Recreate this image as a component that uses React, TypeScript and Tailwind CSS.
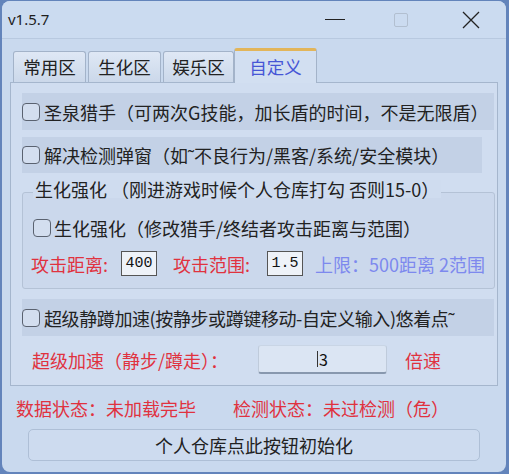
import React from "react";

const CN = { fontFamily: '"Noto Sans CJK SC", "Microsoft YaHei", sans-serif' };

function Check() {
  return (
    <span className="inline-block w-[18px] h-[18px] rounded-[4px] border-[1.5px] border-[#5a6270] bg-[#d3deef] shrink-0" />
  );
}

export default function App() {
  return (
    <div className="w-[509px] h-[474px] bg-[#6384bb] pl-[2px] pr-[3px] pb-[2px] pt-[1px]" style={CN}>
      <div className="h-full rounded-[8px] bg-[#c9d9ee] flex flex-col overflow-hidden">
        {/* title bar */}
        <div className="h-[38px] flex items-center border-b border-[#b8c9e0] bg-[#cbdbf0] shrink-0">
          <span className="ml-[6px] text-[15px] text-[#1e1e1e]" style={{ fontFamily: '"Noto Sans", sans-serif' }}>v1.5.7</span>
          <div className="flex-1" />
          <div className="w-[20px] h-[1px] bg-[#222] mr-[49px]" />
          <div className="w-[14px] h-[14px] border border-[#b2bfd0] rounded-[2px] mr-[54px]" />
          <svg width="18" height="18" viewBox="0 0 18 18" className="mr-[26px]">
            <path d="M1 1 L17 17 M17 1 L1 17" stroke="#222" strokeWidth="1.3" />
          </svg>
        </div>
        {/* tabs */}
        <div className="flex items-end ml-[11px] mt-[8px] h-[35px] shrink-0 relative z-10">
          {["常用区", "生化区", "娱乐区"].map((t, i) => (
            <div
              key={t}
              className={`h-[31px] ${i === 2 ? "w-[71px]" : "w-[73px]"} mr-[2px] border border-[#a3b3c9] border-b-0 rounded-t-[3px] bg-gradient-to-b from-[#dfe8f5] to-[#cbd8ea] flex items-center justify-center text-[17.5px] text-[#222] leading-none pb-[1px]`}
            >
              {t}
            </div>
          ))}
          <div className="h-[35px] w-[83px] -ml-[2px] border border-[#a3b3c9] border-b-0 border-t-[3px] border-t-[#e2b55a] rounded-t-[3px] bg-[#d2dff1] flex items-center justify-center text-[17.5px] text-[#4656d6] leading-none pb-[1px] mb-[-1px]">
            自定义
          </div>
        </div>
        {/* panel */}
        <div className="mx-[8px] h-[304px] border border-[#a5b6cd] bg-[#d0ddf0] flex flex-col pl-[11px] pt-[10px] shrink-0">
          <div className="w-[472px] h-[37px] bg-[#c3d1e6] flex items-center text-[18px] text-[#222] leading-none">
            <Check />
            <span className="ml-[4px] whitespace-nowrap">圣泉猎手（可两次G技能，加长盾的时间，不是无限盾）</span>
          </div>
          <div className="w-[460px] h-[36px] mt-[7px] bg-[#c3d1e6] flex items-center text-[18px] text-[#222] leading-none">
            <Check />
            <span className="ml-[4px] whitespace-nowrap">解决检测弹窗（如˜不良行为/黑客/系统/安全模块）</span>
          </div>
          {/* group box */}
          <div className="relative w-[473px] h-[97px] mt-[19px] border border-[#b4c2d6] rounded-[3px] bg-[#cbd8ec]">
            <div className="absolute left-[10px] -top-[13px] px-[2px] bg-[#cfdcef] text-[18px] text-[#222] leading-none whitespace-nowrap">
              生化强化 （刚进游戏时候个人仓库打勾 否则15-0）
            </div>
            <div className="flex items-center ml-[10px] mt-[26px] text-[18px] text-[#222] leading-none">
              <Check />
              <span className="ml-[3px] whitespace-nowrap">生化强化（修改猎手/终结者攻击距离与范围）</span>
            </div>
            <div className="flex items-center ml-[8px] mt-[14px] text-[18px] leading-none whitespace-nowrap">
              <span className="text-[#e0323f]">攻击距离:</span>
              <span className="ml-[13px] w-[36px] h-[25px] border border-[#555] bg-[#eef2f8] flex items-center justify-center text-[15px] text-[#111]" style={{ fontFamily: '"Liberation Mono", monospace' }}>400</span>
              <span className="ml-[16px] text-[#e0323f]">攻击范围:</span>
              <span className="ml-[17px] w-[36px] h-[25px] border border-[#555] bg-[#eef2f8] flex items-center justify-center text-[15px] text-[#111]" style={{ fontFamily: '"Liberation Mono", monospace' }}>1.5</span>
              <span className="ml-[12px] text-[#7d89ee]">上限：500距离 2范围</span>
            </div>
          </div>
          <div className="w-[472px] h-[37px] mt-[10px] bg-[#c3d1e6] flex items-center text-[18px] text-[#222] leading-none">
            <Check />
            <span className="ml-[4px] whitespace-nowrap tracking-[-0.4px]">超级静蹲加速(按静步或蹲键移动-自定义输入)悠着点˜</span>
          </div>
          <div className="flex items-center mt-[9px] h-[29px] text-[18px] leading-none">
            <span className="ml-[10px] text-[#e0323f] w-[226px] whitespace-nowrap">超级加速（静步/蹲走）：</span>
            <div className="w-[129px] h-[29px] rounded-[3px] bg-[#dbe5f3] border-b-[2px] border-[#8898ae] border border-t-[#c9d5e5] border-x-[#bfcbdb] flex items-center justify-center text-[16px] text-[#111]">
              <span className="w-[1px] h-[16px] bg-[#333] mr-[1px]" />3
            </div>
            <span className="ml-[18px] text-[#e0323f]">倍速</span>
          </div>
        </div>
        {/* status */}
        <div className="flex items-center mt-[11px] h-[22px] ml-[14px] text-[18px] leading-none text-[#e0323f] whitespace-nowrap">
          <span>数据状态：未加载完毕</span>
          <span className="ml-[37px]">检测状态：未过检测（危）</span>
        </div>
        <div className="mx-[26px] mt-[10px] h-[32px] rounded-[5px] border border-[#aebfd6] bg-[#cddbef] flex items-center justify-center text-[18px] text-[#222] leading-none">
          个人仓库点此按钮初始化
        </div>
      </div>
    </div>
  );
}
